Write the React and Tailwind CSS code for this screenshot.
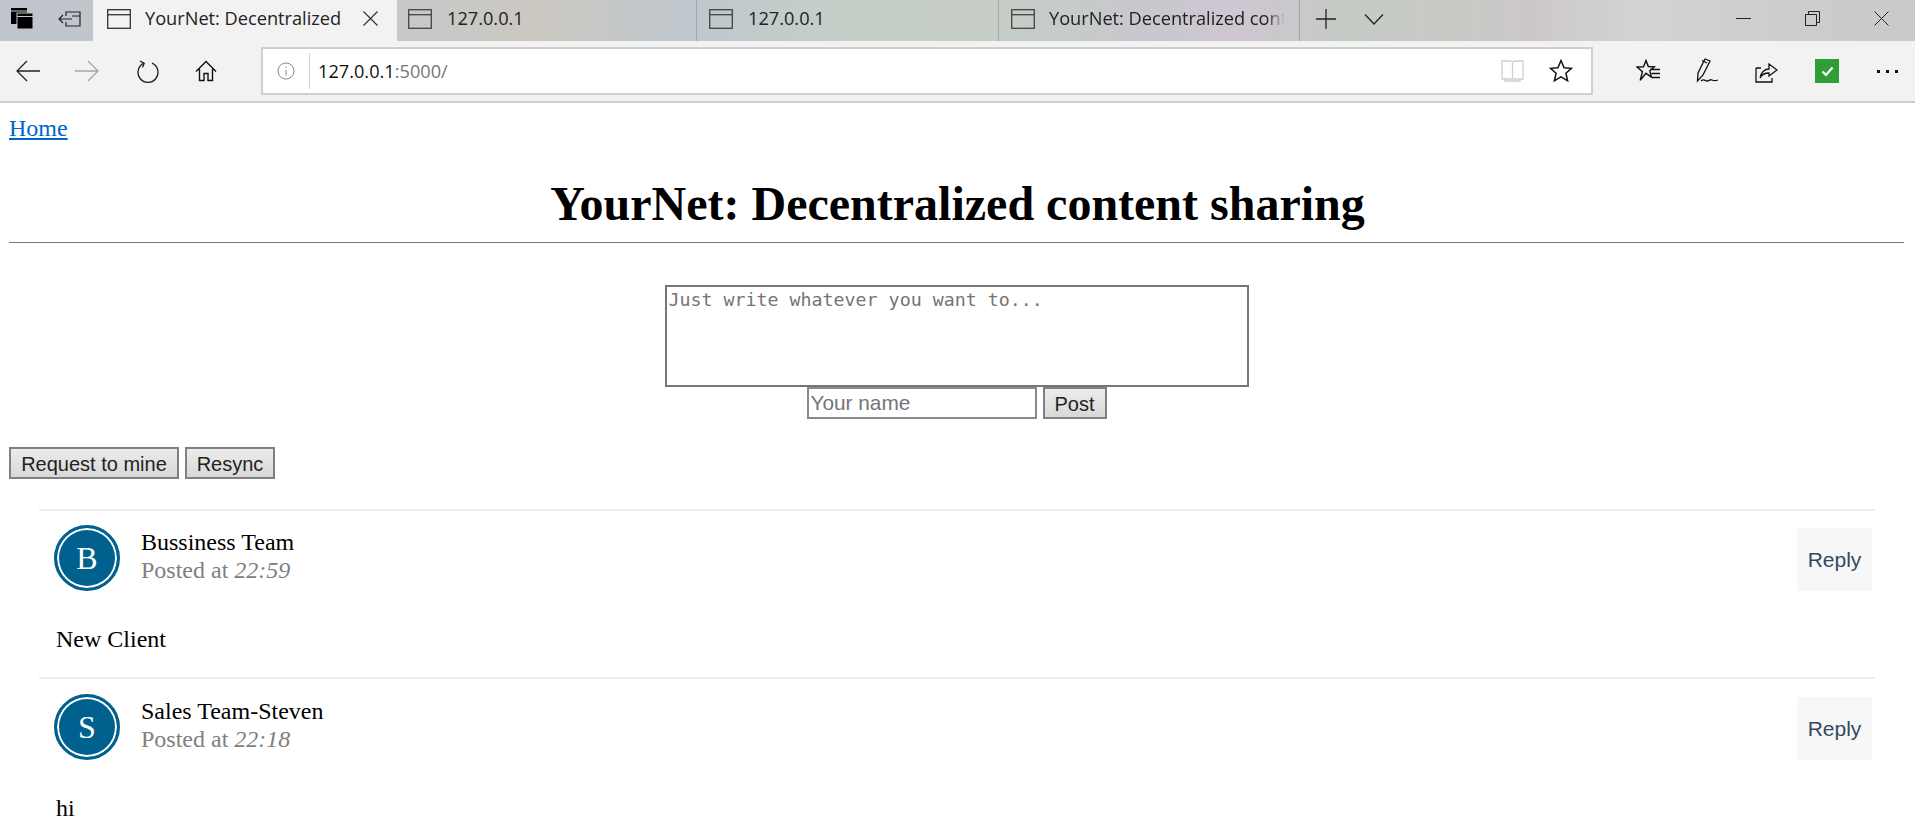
const serif = 'font-["Liberation_Serif",serif]';

function TabIcon({ active }) {
  return (
    <svg width="24" height="20" viewBox="0 0 24 20" fill="none" stroke={active ? '#333' : '#444'} strokeWidth="1.3" className="shrink-0">
      <rect x="0.7" y="0.7" width="22.6" height="18.6" />
      <path d="M0.7 5.7h22.6" />
    </svg>
  );
}

function Tab({ title, width, active, clip, pad, gap }) {
  return (
    <div
      className={
        active
          ? 'flex h-[41px] items-center bg-[#f2f2f2] pb-[4px] shrink-0'
          : 'flex h-[41px] items-center border-r border-[#a3a6a5] pb-[4px] shrink-0'
      }
      style={{ width, paddingLeft: pad }}
    >
      <TabIcon active={active} />
      <span
        className={'overflow-hidden whitespace-nowrap text-[18.2px] text-[#222] ' + (clip ? 'w-[236px] [mask-image:linear-gradient(90deg,#000_92%,transparent)]' : '')}
        style={{ marginLeft: gap }}
      >
        {title}
      </span>
      {active && (
        <svg width="17" height="17" viewBox="0 0 17 17" stroke="#333" strokeWidth="1.2" className="ml-[21px]">
          <path d="M1.5 1.5l14 14M15.5 1.5l-14 14" />
        </svg>
      )}
    </div>
  );
}

function TabBar() {
  return (
    <div className="flex h-[41px] items-center bg-[linear-gradient(90deg,#c0c5cc_0%,#c4c8cc_18%,#ccc8c2_28%,#bfc7cd_36%,#c5cfc8_44%,#c6cdc6_52%,#c8c8ce_60%,#cfc6d2_64%,#c6cbc6_70%,#c8cac6_76%,#cdc8c8_80%,#d2d4d3_86%,#cbccce_94%,#c9cacc_100%)] font-['Open_Sans',sans-serif]">
      <div className="mb-[4px] flex w-[93px] shrink-0 items-center gap-[25px] pl-[11px]">
        <svg width="22" height="21" viewBox="0 0 22 21" fill="#000" className="shrink-0">
          <rect x="0" y="0" width="16" height="16" />
          <rect x="6" y="5" width="16" height="16" stroke="#c4c8cc" />
          <path d="M6 8.5h16M0 3h16" stroke="#c4c8cc" />
        </svg>
        <svg width="23" height="16" viewBox="0 0 23 16" fill="none" stroke="#222" strokeWidth="1.2" className="shrink-0">
          <path d="M8 5V1h14v14H8v-4M1 8h13M5 4L1 8l4 4M14 5h8" />
        </svg>
      </div>
      <Tab title="YourNet: Decentralized" width={304} pad={14} gap={14} active />
      <Tab title="127.0.0.1" width={300} pad={11} gap={15} />
      <Tab title="127.0.0.1" width={302} pad={12} gap={15} />
      <Tab title="YourNet: Decentralized content sharing" width={301} pad={12} gap={14} clip />
      <svg width="20" height="20" viewBox="0 0 20 20" stroke="#222" strokeWidth="1.3" className="mb-[4px] ml-[16px] shrink-0">
        <path d="M10 0v20M0 10h20" />
      </svg>
      <svg width="20" height="12" viewBox="0 0 20 12" fill="none" stroke="#222" strokeWidth="1.3" className="mb-[4px] ml-[28px] shrink-0">
        <path d="M1 1.5l9 9.5 9-9.5" />
      </svg>
      <div className="mb-[4px] ml-auto flex items-center gap-[54px] pr-[26px]">
        <div className="h-px w-[15px] bg-[#222]" />
        <svg width="15" height="15" viewBox="0 0 15 15" fill="none" stroke="#222">
          <path d="M0.5 3.5h11v11H0.5zM3.5 3.5V0.5h11v11h-3" />
        </svg>
        <svg width="15" height="15" viewBox="0 0 15 15" stroke="#222" strokeWidth="1">
          <path d="M0.5 0.5l14 14M14.5 0.5l-14 14" />
        </svg>
      </div>
    </div>
  );
}

function AddressBar() {
  return (
    <div className="flex h-[62px] items-center border-b-2 border-[#cfcfcf] bg-[#f2f2f2] font-['Open_Sans',sans-serif]">
      {/* nav buttons */}
      <div className="flex w-[261px] shrink-0 items-center pl-[16px]">
        <svg width="24" height="22" viewBox="0 0 24 22" fill="none" stroke="#222" strokeWidth="1.3" className="shrink-0">
          <path d="M24 11H1M11 1L1 11l10 10" />
        </svg>
        <svg width="24" height="22" viewBox="0 0 24 22" fill="none" stroke="#a5a5a5" strokeWidth="1.3" className="ml-[35px] shrink-0">
          <path d="M0 11h23M13 1l10 10-10 10" />
        </svg>
        <svg width="22" height="23" viewBox="0 0 22 23" fill="none" stroke="#222" strokeWidth="1.3" className="ml-[38px] shrink-0">
          <path d="M7 3.2a10 10 0 1 0 8 0M3 1.2L7.2 3.2 5.5 7.4" />
        </svg>
        <svg width="22" height="22" viewBox="0 0 22 22" fill="none" stroke="#111" strokeWidth="1.4" className="ml-[36px] shrink-0">
          <path d="M1 11.5L11 1.5l10 10M4.5 9v11.5h4.5V13.500h4v7h4.500V9" />
        </svg>
      </div>
      {/* url box */}
      <div className="flex h-[48px] w-[1332px] shrink-0 items-center border-2 border-[#cfcfcf] bg-white">
        <svg width="18" height="18" viewBox="0 0 18 18" fill="none" stroke="#8a8a8a" className="ml-[14px] shrink-0">
          <circle cx="9" cy="9" r="8" />
          <path d="M9 8v5.5M9 4.5V6" />
        </svg>
        <div className="ml-[14px] h-[36px] w-px bg-[#cfcfcf]" />
        <span className="ml-[8px] mt-[2px] text-[18.2px] text-[#111]">
          127.0.0.1<span className="text-[#767676]">:5000/</span>
        </span>
        <svg width="23" height="22" viewBox="0 0 23 22" fill="none" stroke="#cfcfcf" strokeWidth="1.3" className="ml-auto">
          <path d="M1 1h8.5l2 1 2-1H22v18h-8.5l-2 1.5-2-1.5H1zM11.5 2v17M4 19v2h15v-2" />
        </svg>
        <svg width="24" height="24" viewBox="0 0 24 24" fill="none" stroke="#111" strokeWidth="1.5" className="ml-[25px] mr-[18px]">
          <path d="M12 1.5l3.1 7.2 7.4.6-5.6 4.9 1.7 7.6L12 17.8l-6.6 4 1.7-7.6L1.500 9.300l7.400-.6z" />
        </svg>
      </div>
      {/* toolbar actions */}
      <div className="flex flex-1 items-center pl-[43px]">
        <svg width="24" height="24" viewBox="0 0 24 24" fill="none" stroke="#111" strokeWidth="1.4" className="shrink-0">
          <path d="M10 1.500l2.300 6 6 .3-4.500 4 1.600 6.200-5.400-3.700-5.800 7 2.200-8.600L1 8l6.500-.2zM14 10.500h10M15.500 14.500H24M15.500 18.500H24" />
        </svg>
        <svg width="23" height="26" viewBox="0 0 23 26" fill="none" stroke="#111" strokeWidth="1.300" className="ml-[36px] shrink-0">
          <path d="M9 1L2 15 1.500 23 7 17l7-14zM6 2.500L11 5M5 23c3-3 4 0 6 0s3-2 5-1 3 1 6 0" />
        </svg>
        <svg width="23" height="24" viewBox="0 0 23 24" fill="none" stroke="#111" strokeWidth="1.300" className="ml-[36px] shrink-0">
          <path d="M1 9v14h16v-4M1 9h5M5 19c1-6 5-9 9-9V5l8 6-8 6v-3c-4 0-7 1-9 5z" />
        </svg>
        <div className="ml-[37px] flex h-[24px] w-[24px] shrink-0 items-center justify-center bg-[#2f9e37]">
          <svg width="13" height="11" viewBox="0 0 13 11" fill="none" stroke="#fff" strokeWidth="2.200">
            <path d="M1.500 5.500l3.500 3.500 6.500-7.500" />
          </svg>
        </div>
        <div className="ml-[38px] flex gap-[6px]">
          <div className="h-[3px] w-[3px] bg-[#111]" />
          <div className="h-[3px] w-[3px] bg-[#111]" />
          <div className="h-[3px] w-[3px] bg-[#111]" />
        </div>
      </div>
    </div>
  );
}

function Post({ letter, name, time, body, top }) {
  return (
    <div className="h-[168px] border-t-2 border-[#eee] pl-[15px] pr-[3px]">
      <div className={'flex ' + top}>
        <div className="flex h-[66px] w-[66px] shrink-0 items-center justify-center rounded-full border-[3px] border-[#00618f] bg-[#00618f] text-[32px] text-white shadow-[inset_0_0_0_2px_#fff]">
          {letter}
        </div>
        <div className="ml-[21px] pt-[3px] text-[24px] leading-[28px]">
          <div className="text-black">{name}</div>
          <div className="text-[#808080]">
            Posted at <em>{time}</em>
          </div>
        </div>
        <div className="ml-auto mt-[3px] flex h-[63px] w-[75px] items-center justify-center bg-[#f7f7f7] font-['Liberation_Sans',sans-serif] text-[21px] text-[#34495e]">
          Reply
        </div>
      </div>
      <p className="ml-[2px] mt-[34px] text-[24px] leading-[28px] text-black">{body}</p>
    </div>
  );
}

export default function App() {
  return (
    <div className={'h-[832px] overflow-hidden bg-white ' + serif}>
      <TabBar />
      <AddressBar />
      <div className="pl-[9px] pr-[11px]">
        <a href="#" className="mt-[11px] block w-fit text-[24px] leading-[28px] text-[#0066cc] underline">Home</a>
        <h1 className="mt-[36px] pl-[2px] text-center text-[48px] font-bold leading-[52px] text-black">YourNet: Decentralized content sharing</h1>
        <hr className="mt-[12px] border-t border-[#767676]" />
        <div className="mt-[42px] flex flex-col items-center font-['Liberation_Sans',sans-serif]">
          <textarea
            readOnly
            placeholder="Just write whatever you want to..."
            className="block h-[102px] w-[584px] resize-none border-2 border-[#767676] px-[2px] py-[2px] font-['DejaVu_Sans_Mono',monospace] text-[18.3px] leading-[22px] placeholder:text-[#757575]"
          />
          <div className="flex h-[32px] items-center gap-[6px]">
            <input
              readOnly
              placeholder="Your name"
              className="h-[32px] w-[230px] border-2 border-[#8a8a8a] px-[2px] text-[20.8px] placeholder:text-[#757575]"
            />
            <button className="h-[32px] w-[64px] border-2 border-[#808080] bg-[linear-gradient(#ececec,#d8d8d8)] text-[20px] text-[#222]">Post</button>
          </div>
        </div>
        <div className="mt-[28px] flex gap-[6px] font-['Liberation_Sans',sans-serif] text-[20px] text-[#222]">
          <button className="h-[32px] w-[170px] border-2 border-[#808080] bg-[linear-gradient(#ececec,#d8d8d8)]">Request to mine</button>
          <button className="h-[32px] w-[90px] border-2 border-[#808080] bg-[linear-gradient(#ececec,#d8d8d8)]">Resync</button>
        </div>
        <div className="ml-[30px] mr-[29px] mt-[30px]">
          <Post letter="B" name="Bussiness Team" time="22:59" body="New Client" top="pt-[14px]" />
          <Post letter="S" name="Sales Team-Steven" time="22:18" body="hi" top="pt-[15px]" />
        </div>
      </div>
    </div>
  );
}
